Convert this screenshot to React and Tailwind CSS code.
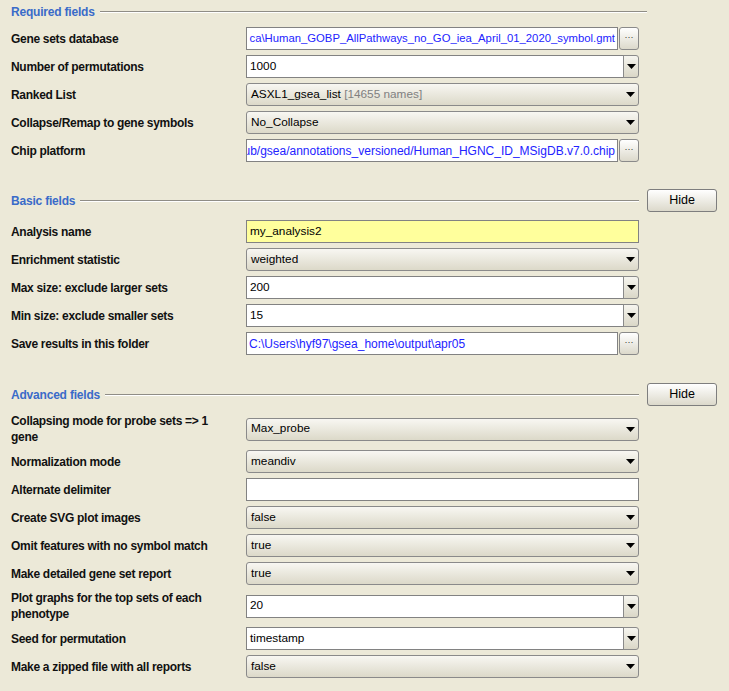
import React from 'react';

const labelCls = "text-[12px] font-bold text-[#111] tracking-[-0.3px] leading-[16px]";
const fieldFont = "text-[11.8px] leading-none";

function Arrow() {
    return (
        <svg width="9" height="5" viewBox="0 0 9 5" className="shrink-0">
            <polygon points="0,0 9,0 4.5,5" fill="#000" />
        </svg>
    );
}

function SectionHeader({ title, hide }) {
    return (
        <div className="flex items-center h-[23px] w-[706px]">
            <span className="text-[12px] font-bold text-[#3a6bc9] tracking-[-0.2px] whitespace-nowrap">{title}</span>
            <div className={`flex-1 ml-[5px] border-t border-[#8f8d86] border-b border-b-white ${hide ? 'mr-2' : ''}`}></div>
            {hide ? (
                <button className="w-[70px] h-[23px] rounded-[3px] border border-[#7e7e7e] bg-linear-to-b from-white to-[#dcd9cb] text-[12.5px] text-black">
                    Hide
                </button>
            ) : (
                <div className="w-[70px]"></div>
            )}
        </div>
    );
}

function FileField({ value, end, small }) {
    return (
        <div className="flex h-[23px] gap-px">
            <div className={`flex-1 min-w-0 border border-[#828282] bg-white flex items-center overflow-hidden px-[2px] text-[#2323ff] whitespace-nowrap leading-none ${end ? 'justify-end' : 'justify-start'} ${small ? 'text-[11.3px]' : 'text-[12px]'}`}>
                <span>{value}</span>
            </div>
            <button className="w-[20px] rounded-[3px] border border-[#8a8a8a] bg-linear-to-b from-white to-[#dcd9cb] flex items-center justify-center text-[9px] text-[#333] leading-none pb-[2px]">
                ···
            </button>
        </div>
    );
}

function EditCombo({ value }) {
    return (
        <div className="flex h-[23px]">
            <div className={`flex-1 min-w-0 border border-[#828282] bg-white flex items-center px-[3px] text-black ${fieldFont}`}>
                {value}
            </div>
            <div className="w-[16px] -ml-px rounded-r-[3px] border border-[#8a8a8a] bg-linear-to-b from-[#f6f5ef] to-[#dad7c7] flex items-center justify-center">
                <Arrow />
            </div>
        </div>
    );
}

function Combo({ children }) {
    return (
        <div className={`h-[23px] rounded-[3px] border border-[#8a8a8a] bg-linear-to-b from-[#f8f7f2] to-[#dcd9c9] flex items-center justify-between pl-[4px] pr-[3px] text-black ${fieldFont}`}>
            <span>{children}</span>
            <Arrow />
        </div>
    );
}

function TextInput({ value, yellow }) {
    return (
        <div className={`h-[23px] border border-[#828282] flex items-center px-[3px] text-black ${yellow ? 'bg-[#ffff9c]' : 'bg-white'} ${fieldFont}`}>
            {value}
        </div>
    );
}

function Rows({ rows }) {
    return (
        <div className="grid grid-cols-[235px_393px] gap-y-[5px] items-center">
            {rows.map(([label, field], i) => (
                <React.Fragment key={i}>
                    <div className={labelCls}>{label}</div>
                    <div>{field}</div>
                </React.Fragment>
            ))}
        </div>
    );
}

export default function App() {
    const required = [
        ["Gene sets database", <FileField end small value="ca\Human_GOBP_AllPathways_no_GO_iea_April_01_2020_symbol.gmt" />],
        ["Number of permutations", <EditCombo value="1000" />],
        ["Ranked List", <Combo>ASXL1_gsea_list <span className="text-[#808080]">[14655 names]</span></Combo>],
        ["Collapse/Remap to gene symbols", <Combo>No_Collapse</Combo>],
        ["Chip platform", <FileField end value="pub/gsea/annotations_versioned/Human_HGNC_ID_MSigDB.v7.0.chip" />],
    ];
    const basic = [
        ["Analysis name", <TextInput value="my_analysis2" yellow />],
        ["Enrichment statistic", <Combo>weighted</Combo>],
        ["Max size: exclude larger sets", <EditCombo value="200" />],
        ["Min size: exclude smaller sets", <EditCombo value="15" />],
        ["Save results in this folder", <FileField value="C:\Users\hyf97\gsea_home\output\apr05" />],
    ];
    const advanced = [
        [<>Collapsing mode for probe sets =&gt; 1<br />gene</>, <Combo>Max_probe</Combo>],
        ["Normalization mode", <Combo>meandiv</Combo>],
        ["Alternate delimiter", <TextInput value="" />],
        ["Create SVG plot images", <Combo>false</Combo>],
        ["Omit features with no symbol match", <Combo>true</Combo>],
        ["Make detailed gene set report", <Combo>true</Combo>],
        [<>Plot graphs for the top sets of each<br />phenotype</>, <EditCombo value="20" />],
        ["Seed for permutation", <EditCombo value="timestamp" />],
        ["Make a zipped file with all reports", <Combo>false</Combo>],
    ];

    return (
        <div className="min-h-screen w-full bg-[#ece9d8] pl-[11px] font-['Liberation_Sans',Arial,sans-serif]">
            <SectionHeader title="Required fields" />
            <div className="mt-[4px]">
                <Rows rows={required} />
            </div>
            <div className="mt-[27px]">
                <SectionHeader title="Basic fields" hide />
            </div>
            <div className="mt-[8px]">
                <Rows rows={basic} />
            </div>
            <div className="mt-[28px]">
                <SectionHeader title="Advanced fields" hide />
            </div>
            <div className="mt-[7px]">
                <Rows rows={advanced} />
            </div>
        </div>
    );
}
